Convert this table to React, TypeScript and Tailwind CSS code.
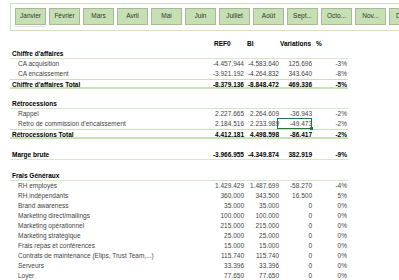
const months = ["Janvier", "Février", "Mars", "Avril", "Mai", "Juin", "Juillet", "Août", "Sept...", "Octo...", "Nov...", "Déc..."];

type Row = {
  label?: string;
  vals?: string[];
  kind: "head" | "item" | "total" | "blank" | "marge";
};

const rows: Row[] = [
  { label: "Chiffre d'affaires", kind: "head" },
  { label: "CA acquisition", vals: ["-4.457.944", "-4.583.640", "125.696", "-3%"], kind: "item" },
  { label: "CA encaissement", vals: ["-3.921.192", "-4.264.832", "343.640", "-8%"], kind: "item" },
  { label: "Chiffre d'affaires Total", vals: ["-8.379.136", "-8.848.472", "469.336", "-5%"], kind: "total" },
  { kind: "blank" },
  { label: "Rétrocessions", kind: "head" },
  { label: "Rappel", vals: ["2.227.665", "2.264.609", "-36.943", "-2%"], kind: "item" },
  { label: "Retro de commission d'encaissement", vals: ["2.184.516", "2.233.989", "-49.473", "-2%"], kind: "item" },
  { label: "Rétrocessions Total", vals: ["4.412.181", "4.498.598", "-86.417", "-2%"], kind: "total" },
  { kind: "blank" },
  { label: "Marge brute", vals: ["-3.966.955", "-4.349.874", "382.919", "-9%"], kind: "marge" },
  { kind: "blank" },
  { label: "Frais Généraux", kind: "head" },
  { label: "RH employés", vals: ["1.429.429", "1.487.699", "-58.270", "-4%"], kind: "item" },
  { label: "RH indépendants", vals: ["360.000", "343.500", "16.500", "5%"], kind: "item" },
  { label: "Brand awareness", vals: ["35.000", "35.000", "0", "0%"], kind: "item" },
  { label: "Marketing direct/mailings", vals: ["100.000", "100.000", "0", "0%"], kind: "item" },
  { label: "Marketing opérationnel", vals: ["215.000", "215.000", "0", "0%"], kind: "item" },
  { label: "Marketing stratégique", vals: ["25.000", "25.000", "0", "0%"], kind: "item" },
  { label: "Frais repas et conférences", vals: ["15.000", "15.000", "0", "0%"], kind: "item" },
  { label: "Contrats de maintenance (Elips, Trust Team,...)", vals: ["115.740", "115.740", "0", "0%"], kind: "item" },
  { label: "Serveurs", vals: ["33.396", "33.396", "0", "0%"], kind: "item" },
  { label: "Loyer", vals: ["77.650", "77.650", "0", "0%"], kind: "item" },
];

const MonthBar = () => {
  return (
    <div className="ml-[10px] mt-[3px] h-[28px] border border-r-0 border-[#cfe3c2] flex items-start gap-[3px] pl-[4px] pt-[4px] overflow-hidden">
      {months.map((m, i) => (
        <div key={m} className="flex flex-col shrink-0">
          <div className="w-[31px] h-[17px] bg-[#c6e0b4] border border-[#a8b8a0] flex items-center justify-center text-[6.5px] text-[#333] leading-none whitespace-nowrap">
            {m}
          </div>
          {i === 0 && <div className="h-[1px] mt-[1px] bg-[#e4e4e4] w-[31px]" />}
        </div>
      ))}
    </div>
  );
};

const TableRow = ({ row, tall }: { row: Row; tall?: boolean }) => {
  const bold = row.kind !== "item";
  let border = "";
  if (row.kind === "head" || row.kind === "marge") border = "border-b border-[#d5e8c8]";
  if (row.kind === "total") border = "border-t border-b-2 border-[#c9e0b8]";
  const isCursor = row.label === "Retro de commission d'encaissement";

  return (
    <div className={`grid grid-cols-[200px_35px_35px_33px_35px] ${tall ? "h-[11px]" : "h-[10px]"} leading-[9px] ${border} ${bold ? "font-bold text-black" : "text-[#444]"}`}>
      <div className={row.kind === "item" ? "pl-[8px]" : "pl-[2px]"}>{row.label}</div>
      {row.vals?.map((v, i) => (
        <div key={i} className={`text-right pr-[1px] ${isCursor && i === 2 ? "relative" : ""}`}>
          {v}
          {isCursor && i === 2 && (
            <div className="absolute -left-[3px] -top-[1px] w-[35px] h-[11px] border border-[#217346]">
              <div className="absolute -right-[2px] -bottom-[2px] w-[3px] h-[3px] bg-[#217346]" />
            </div>
          )}
        </div>
      ))}
    </div>
  );
};

export default function App() {
  return (
    <div className="w-[399px] h-[280px] overflow-hidden bg-white" style={{ fontFamily: '"Liberation Sans", Arial, sans-serif' }}>
      <MonthBar />
      <div className="ml-[10px] mt-[8px] w-[338px] text-[6.5px]">
        <div className="grid grid-cols-[200px_35px_35px_33px_35px] h-[10px] leading-[9px] font-bold text-black">
          <div />
          <div className="pl-[4px]">REF0</div>
          <div className="pl-[2px]">BI</div>
          <div className="pl-[0px]">Variations</div>
          <div className="pl-[3px]">%</div>
        </div>
        {rows.map((r, i) => (
          <TableRow key={i} row={r} tall={i === 9 || i === 11} />
        ))}
      </div>
    </div>
  );
}
